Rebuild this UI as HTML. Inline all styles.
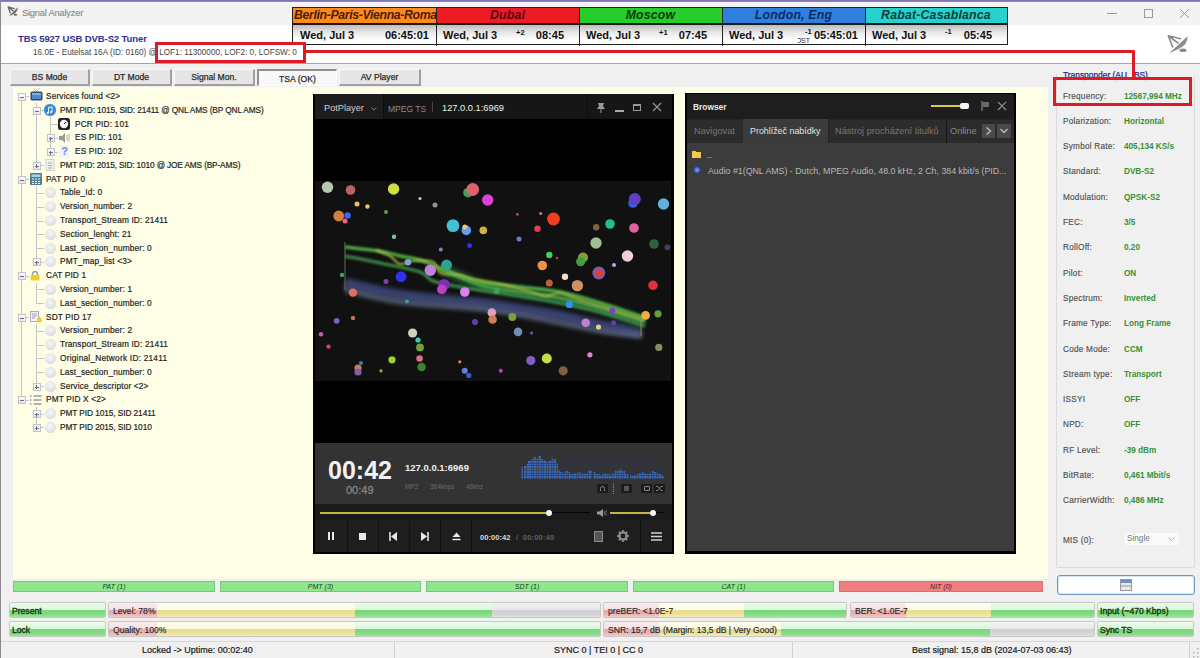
<!DOCTYPE html>
<html><head><meta charset="utf-8">
<style>
*{margin:0;padding:0;box-sizing:border-box}
html,body{width:1200px;height:658px;overflow:hidden;background:#f0f0f0;font-family:"Liberation Sans",sans-serif}
.a{position:absolute}
#win{position:absolute;left:0;top:0;width:1200px;height:658px;background:#f0f0f0;border-left:1px solid #8a8a8a}
#topb{left:0;top:0;width:1200px;height:2px;background:linear-gradient(#746aa8,#9a90c8)}
#title{left:1px;top:2px;width:1199px;height:23px;background:linear-gradient(#f6f2fa 0,#f3f3f3 3px,#f3f3f3 100%)}
#hdr{left:1px;top:25px;width:1199px;height:38px;background:#fff}
#sep{left:1px;top:63px;width:1199px;height:1px;background:#a3a3a3}
.t{position:absolute;white-space:nowrap}
/* clock table */
#clk{left:292px;top:7px;width:716px;height:38px;border:1px solid #222;background:#fff}
.ch{position:absolute;top:0;height:17px;border-bottom:2px solid #1a1a1a;font:bold italic 12.3px "Liberation Sans";text-align:center;line-height:15px;letter-spacing:0.2px;white-space:nowrap;overflow:hidden}
.cr{position:absolute;top:17px;height:19px;background:linear-gradient(#bdbdbd,#e8e8e8 40%,#fafafa 70%,#fff);font:bold 11px "Liberation Sans";line-height:20px;color:#111}
.cv{position:absolute;top:0;width:1px;height:38px;background:#222}
/* tabs */
.tab{position:absolute;top:69px;height:17px;background:#e6e6e6;border-top:1px solid #f8f8f8;border-left:1px solid #f8f8f8;border-right:2px solid #a0a0a0;border-bottom:2px solid #a0a0a0;font:8.6px "Liberation Sans";color:#222;text-align:center;line-height:15px;-webkit-text-stroke:0.25px #333}
#tree{left:13px;top:87px;width:1035px;height:492px;background:#fefee6}
.tr{position:absolute;font:8.3px "Liberation Sans";color:#161616;white-space:nowrap;letter-spacing:0.15px;-webkit-text-stroke:0.2px #333}
/* status bars */
.sb{position:absolute;top:581px;height:11px;background:#8ee68e;border:1px solid #78c878;font:italic 7px "Liberation Sans";color:#1f3f1f;text-align:center;line-height:10px}
.bar{position:absolute;height:16px;border:1px solid #c8c8c8;border-radius:2px;overflow:hidden;background:#e8e8e8}
.bar .lbl{position:absolute;left:4px;top:1px;font:8.6px "Liberation Sans";color:#2a2a2a;line-height:15px;white-space:nowrap;-webkit-text-stroke:0.15px currentColor}
.seg{position:absolute;top:0;height:14px}
.g{background:linear-gradient(#e8fce8 0,#dcf7dc 48%,#7ad67a 52%,#84da84 80%,#9be49b 100%)}
.y{background:linear-gradient(#fffef0 0,#fdfbe2 48%,#e8de8c 52%,#ebe19a 80%,#f3ecc0 100%)}
.p{background:linear-gradient(#fcecec 0,#f6e0e0 48%,#e4aaaa 52%,#e8b4b4 80%,#f0cccc 100%)}
.gr{background:linear-gradient(#f2f2f2 0,#e8e8e8 48%,#d0d0d0 52%,#d4d4d4 80%,#e0e0e0 100%)}
#status{left:1px;top:641px;width:1199px;height:17px;background:#f0f0f0;border-top:1px solid #d8d8d8}
.st{position:absolute;top:4px;font:9px "Liberation Sans";color:#1a1a1a;white-space:nowrap;-webkit-text-stroke:0.2px #1a1a1a}
/* right panel */
#grp{left:1056px;top:73px;width:139px;height:495px;border:1px solid #dcdcdc;border-top-color:transparent;border-radius:2px}
.rl{position:absolute;left:1063px;font:8.2px "Liberation Sans";color:#505050;white-space:nowrap;letter-spacing:0.25px;-webkit-text-stroke:0.15px #505050}
.rv{position:absolute;left:1124px;font:bold 8.2px "Liberation Sans";color:#369236;white-space:nowrap}
/* potplayer */
#pp{left:313px;top:94px;width:361px;height:460px;background:#000}
#bw{left:685px;top:93px;width:331px;height:461px;background:#000}
.red{position:absolute;background:#dc1c26}
</style></head><body>
<div id="win"></div>
<div id="topb" class="a"></div>
<div id="title" class="a"></div>
<div id="hdr" class="a"></div>
<div id="sep" class="a"></div>


<!-- title bar content -->
<svg class="a" style="left:6px;top:5px" width="14" height="14" viewBox="0 0 28 26" preserveAspectRatio="none"><g stroke="#6a6a6a" stroke-linecap="round" fill="none"><path d="M4.3 3.8L16.5 6.7M4.3 3.8L8.7 15M4.3 3.8L14 11" stroke-width="2.6"/></g><path d="M5.2 21.2L23.6 4.3Q23.5 13 15.5 16.5Z" fill="#6a6a6a"/><ellipse cx="19" cy="18.2" rx="3.6" ry="1.8" fill="#6a6a6a"/></svg>
<div class="t" style="left:22px;top:7.5px;font:9.3px 'Liberation Sans';color:#8c8c8c;letter-spacing:-0.2px;-webkit-text-stroke:0.15px #8c8c8c">Signal Analyzer</div>
<div class="a" style="left:1107px;top:13px;width:10px;height:1px;background:#999"></div>
<div class="a" style="left:1144px;top:9px;width:9px;height:9px;border:1px solid #999"></div>
<svg class="a" style="left:1179px;top:8px" width="11" height="11" viewBox="0 0 11 11"><path d="M1 1L10 10M10 1L1 10" stroke="#999" stroke-width="1"/></svg>
<!-- header -->
<div class="t" style="left:18px;top:33px;font:bold 9.5px 'Liberation Sans';color:#2e3192;letter-spacing:-0.1px">TBS 5927 USB DVB-S2 Tuner</div>
<div class="t" style="left:33px;top:48px;font:8.2px 'Liberation Sans';color:#454545">16.0E - Eutelsat 16A (ID: 0160) @ LOF1: 11300000, LOF2: 0, LOFSW: 0</div>
<svg class="a" style="left:1164px;top:32px" width="28" height="26" viewBox="0 0 28 26"><g stroke="#8a8a8a" stroke-linecap="round" fill="none"><path d="M4.3 3.8L16.5 6.7M4.3 3.8L8.7 15M4.3 3.8L14 11" stroke-width="1.6"/></g><path d="M5.2 21.2L23.6 4.3Q23.5 13 15.5 16.5Z" fill="#8c8c8c"/><ellipse cx="19" cy="18.2" rx="3.6" ry="1.8" fill="#8c8c8c"/></svg>
<!-- clock table -->
<div id="clk" class="a">
 <div class="ch" style="left:0;width:143px;background:#ff8a1c;color:#4a1e00;letter-spacing:-0.35px;text-indent:1px">Berlin-Paris-Vienna-Roma</div>
 <div class="ch" style="left:143px;width:143px;background:#ec1b24;color:#5c0010">Dubai</div>
 <div class="ch" style="left:286px;width:143px;background:#27cd2b;color:#083c08">Moscow</div>
 <div class="ch" style="left:429px;width:143px;background:#2f80dc;color:#0b2a66">London, Eng</div>
 <div class="ch" style="left:572px;width:142px;background:#27d2cc;color:#084040">Rabat-Casablanca</div>
 <div class="cr" style="left:0;width:143px"><span class="t" style="left:7px">Wed, Jul 3</span><span class="t" style="right:7px">06:45:01</span></div>
 <div class="cr" style="left:143px;width:143px"><span class="t" style="left:7px">Wed, Jul 3</span><span class="t" style="left:80px;top:4px;font-size:7.5px;line-height:8px">+2</span><span class="t" style="right:15px">08:45</span></div>
 <div class="cr" style="left:286px;width:143px"><span class="t" style="left:7px">Wed, Jul 3</span><span class="t" style="left:80px;top:4px;font-size:7.5px;line-height:8px">+1</span><span class="t" style="right:15px">07:45</span></div>
 <div class="cr" style="left:429px;width:143px"><span class="t" style="left:7px">Wed, Jul 3</span><span class="t" style="left:83px;top:3px;font-size:7.5px;line-height:8px">-1</span><span class="t" style="left:75px;top:12px;font:7px/7px 'Liberation Sans';color:#333">ↃST</span><span class="t" style="right:7px">05:45:01</span></div>
 <div class="cr" style="left:572px;width:142px"><span class="t" style="left:7px">Wed, Jul 3</span><span class="t" style="left:80px;top:3px;font-size:7.5px;line-height:8px">-1</span><span class="t" style="right:15px">05:45</span></div>
 <div class="cv" style="left:143px"></div><div class="cv" style="left:286px"></div><div class="cv" style="left:429px"></div><div class="cv" style="left:572px"></div>
</div>
<!-- tabs -->
<div class="tab" style="left:10px;width:80px">BS Mode</div>
<div class="tab" style="left:92px;width:80px">DT Mode</div>
<div class="tab" style="left:174px;width:81px">Signal Mon.</div>
<div class="tab" style="left:257px;width:80px;background:#f8f8f8;border-top:2px solid #909090;border-left:2px solid #909090;border-right:1px solid #fff;border-bottom:1px solid #fff;line-height:16px">TSA (OK)</div>
<div class="tab" style="left:339px;width:82px">AV Player</div>
<div id="tree" class="a"></div>
<!--TREE-->
<div style="position:absolute;background:#c4c4c4;left:21px;top:96px;width:1px;height:303px"></div>
<div style="position:absolute;background:#c4c4c4;left:36px;top:103px;width:1px;height:62px"></div>
<div style="position:absolute;background:#c4c4c4;left:50px;top:117px;width:1px;height:34px"></div>
<div style="position:absolute;background:#c4c4c4;left:36px;top:186px;width:1px;height:76px"></div>
<div style="position:absolute;background:#c4c4c4;left:36px;top:283px;width:1px;height:21px"></div>
<div style="position:absolute;background:#c4c4c4;left:36px;top:324px;width:1px;height:62px"></div>
<div style="position:absolute;background:#c4c4c4;left:36px;top:407px;width:1px;height:21px"></div>
<div style="position:absolute;background:#c4c4c4;left:21px;top:96px;width:8px;height:1px"></div>
<div style="position:absolute;left:17.5px;top:92.9px;width:8px;height:8px;border:1px solid #c2c2c8;background:linear-gradient(#fbfbfd,#e6e6ee)"><div style="position:absolute;left:1px;top:3px;width:4px;height:1px;background:#6a6a80"></div></div>
<svg style="position:absolute;left:30px;top:88px" width="13" height="13" viewBox="0 0 13 13"><path d="M3.5 0.5L6.5 3.5L9.5 0.5" stroke="#a8b0c0" fill="none"/><rect x="0.5" y="3.5" width="12" height="9" rx="1.5" fill="#3e4a5c"/><rect x="2" y="5" width="9" height="6" fill="#4a88d0"/><rect x="2" y="5" width="9" height="2" fill="#7ab0e8"/></svg>
<div class="tr" style="left:46px;top:90.9px;">Services found &lt;2&gt;</div>
<div style="position:absolute;background:#c4c4c4;left:36px;top:110px;width:8px;height:1px"></div>
<div style="position:absolute;left:32.5px;top:106.7px;width:8px;height:8px;border:1px solid #c2c2c8;background:linear-gradient(#fbfbfd,#e6e6ee)"><div style="position:absolute;left:1px;top:3px;width:4px;height:1px;background:#6a6a80"></div></div>
<svg style="position:absolute;left:43px;top:103px" width="14" height="14" viewBox="0 0 14 14"><circle cx="7" cy="7" r="6.6" fill="#bfe6f4"/><circle cx="7" cy="7" r="6" fill="#3a88cc"/><path d="M5.5 10V4.5L9 3.8V9" stroke="#e8f4ff" stroke-width="1" fill="none"/><circle cx="4.6" cy="10" r="1.1" fill="#e8f4ff"/><circle cx="8.1" cy="9.2" r="1.1" fill="#e8f4ff"/></svg>
<div class="tr" style="left:60px;top:104.7px;letter-spacing:-0.12px;">PMT PID: 1015, SID: 21411 @ QNL AMS (BP QNL AMS)</div>
<div style="position:absolute;background:#c4c4c4;left:50px;top:124px;width:8px;height:1px"></div>
<svg style="position:absolute;left:58px;top:118px" width="12" height="12" viewBox="0 0 12 12"><rect x="0" y="0" width="12" height="12" rx="2.5" fill="#222"/><circle cx="6" cy="6" r="4.2" fill="#f4f4f4"/><path d="M6 6L8 4" stroke="#333"/></svg>
<div class="tr" style="left:75px;top:118.5px;">PCR PID: 101</div>
<div style="position:absolute;background:#c4c4c4;left:50px;top:138px;width:8px;height:1px"></div>
<div style="position:absolute;left:46.5px;top:134.3px;width:8px;height:8px;border:1px solid #c2c2c8;background:linear-gradient(#fbfbfd,#e6e6ee)"><div style="position:absolute;left:1px;top:3px;width:4px;height:1px;background:#6a6a80"></div><div style="position:absolute;left:2.5px;top:1.5px;width:1px;height:4px;background:#6a6a80"></div></div>
<svg style="position:absolute;left:58px;top:132px" width="12" height="12" viewBox="0 0 12 12"><path d="M1 4h3l3-3v10l-3-3H1z" fill="#9a9a9a"/><path d="M9 3v6M11 2v8" stroke="#b0b0b0"/></svg>
<div class="tr" style="left:75px;top:132.3px;">ES PID: 101</div>
<div style="position:absolute;background:#c4c4c4;left:50px;top:152px;width:8px;height:1px"></div>
<div style="position:absolute;left:46.5px;top:148.1px;width:8px;height:8px;border:1px solid #c2c2c8;background:linear-gradient(#fbfbfd,#e6e6ee)"><div style="position:absolute;left:1px;top:3px;width:4px;height:1px;background:#6a6a80"></div><div style="position:absolute;left:2.5px;top:1.5px;width:1px;height:4px;background:#6a6a80"></div></div>
<div style="position:absolute;left:59px;top:145px;width:11px;height:13px;background:#f2f4fa;color:#6a8ad0;font:bold 11px 'Liberation Sans';text-align:center;line-height:13px">?</div>
<div class="tr" style="left:75px;top:146.1px;">ES PID: 102</div>
<div style="position:absolute;background:#c4c4c4;left:36px;top:165px;width:8px;height:1px"></div>
<div style="position:absolute;left:32.5px;top:161.8px;width:8px;height:8px;border:1px solid #c2c2c8;background:linear-gradient(#fbfbfd,#e6e6ee)"><div style="position:absolute;left:1px;top:3px;width:4px;height:1px;background:#6a6a80"></div><div style="position:absolute;left:2.5px;top:1.5px;width:1px;height:4px;background:#6a6a80"></div></div>
<svg style="position:absolute;left:45px;top:159px" width="10" height="12" viewBox="0 0 10 12"><rect x="1" y="0.5" width="8" height="11" fill="#eef0ee" stroke="#d0d4d0"/><path d="M3 4h4M3 6.5h4M3 9h4" stroke="#a8aca8" stroke-width="1.2"/></svg>
<div class="tr" style="left:60px;top:159.8px;letter-spacing:-0.15px;">PMT PID: 2015, SID: 1010 @ JOE AMS (BP-AMS)</div>
<div style="position:absolute;background:#c4c4c4;left:21px;top:179px;width:8px;height:1px"></div>
<div style="position:absolute;left:17.5px;top:175.6px;width:8px;height:8px;border:1px solid #c2c2c8;background:linear-gradient(#fbfbfd,#e6e6ee)"><div style="position:absolute;left:1px;top:3px;width:4px;height:1px;background:#6a6a80"></div></div>
<svg style="position:absolute;left:30px;top:173px" width="12" height="12" viewBox="0 0 12 12"><rect x="0" y="0" width="12" height="12" rx="1" fill="#5a7a92"/><rect x="1.5" y="1.5" width="9" height="2.5" fill="#9ad8f0"/><path d="M2 6h2M5 6h2M8 6h2M2 8.5h2M5 8.5h2M8 8.5h2M2 10.5h2M5 10.5h2M8 10.5h2" stroke="#f0f4f8" stroke-width="1.1"/></svg>
<div class="tr" style="left:46px;top:173.6px;">PAT PID 0</div>
<div style="position:absolute;background:#c4c4c4;left:36px;top:193px;width:8px;height:1px"></div>
<div style="position:absolute;left:44.5px;top:187.4px;width:11px;height:11px;border-radius:50%;background:radial-gradient(circle at 45% 40%,#f6f6f8 0,#e6e6ea 50%,#cdcdd2 100%)"></div>
<div class="tr" style="left:60px;top:187.4px;">Table_Id: 0</div>
<div style="position:absolute;background:#c4c4c4;left:36px;top:207px;width:8px;height:1px"></div>
<div style="position:absolute;left:44.5px;top:201.2px;width:11px;height:11px;border-radius:50%;background:radial-gradient(circle at 45% 40%,#f6f6f8 0,#e6e6ea 50%,#cdcdd2 100%)"></div>
<div class="tr" style="left:60px;top:201.2px;">Version_number: 2</div>
<div style="position:absolute;background:#c4c4c4;left:36px;top:221px;width:8px;height:1px"></div>
<div style="position:absolute;left:44.5px;top:215.0px;width:11px;height:11px;border-radius:50%;background:radial-gradient(circle at 45% 40%,#f6f6f8 0,#e6e6ea 50%,#cdcdd2 100%)"></div>
<div class="tr" style="left:60px;top:215.0px;">Transport_Stream ID: 21411</div>
<div style="position:absolute;background:#c4c4c4;left:36px;top:234px;width:8px;height:1px"></div>
<div style="position:absolute;left:44.5px;top:228.8px;width:11px;height:11px;border-radius:50%;background:radial-gradient(circle at 45% 40%,#f6f6f8 0,#e6e6ea 50%,#cdcdd2 100%)"></div>
<div class="tr" style="left:60px;top:228.8px;">Section_lenght: 21</div>
<div style="position:absolute;background:#c4c4c4;left:36px;top:248px;width:8px;height:1px"></div>
<div style="position:absolute;left:44.5px;top:242.6px;width:11px;height:11px;border-radius:50%;background:radial-gradient(circle at 45% 40%,#f6f6f8 0,#e6e6ea 50%,#cdcdd2 100%)"></div>
<div class="tr" style="left:60px;top:242.6px;">Last_section_number: 0</div>
<div style="position:absolute;background:#c4c4c4;left:36px;top:262px;width:8px;height:1px"></div>
<div style="position:absolute;left:32.5px;top:258.4px;width:8px;height:8px;border:1px solid #c2c2c8;background:linear-gradient(#fbfbfd,#e6e6ee)"><div style="position:absolute;left:1px;top:3px;width:4px;height:1px;background:#6a6a80"></div><div style="position:absolute;left:2.5px;top:1.5px;width:1px;height:4px;background:#6a6a80"></div></div>
<div style="position:absolute;left:44.5px;top:256.4px;width:11px;height:11px;border-radius:50%;background:radial-gradient(circle at 45% 40%,#f6f6f8 0,#e6e6ea 50%,#cdcdd2 100%)"></div>
<div class="tr" style="left:60px;top:256.4px;">PMT_map_list &lt;3&gt;</div>
<div style="position:absolute;background:#c4c4c4;left:21px;top:276px;width:8px;height:1px"></div>
<div style="position:absolute;left:17.5px;top:272.2px;width:8px;height:8px;border:1px solid #c2c2c8;background:linear-gradient(#fbfbfd,#e6e6ee)"><div style="position:absolute;left:1px;top:3px;width:4px;height:1px;background:#6a6a80"></div></div>
<svg style="position:absolute;left:30px;top:271px" width="10" height="10" viewBox="0 0 10 10"><path d="M2.5 4.5V3a2.5 2.5 0 0 1 5 0v1.5" stroke="#9a9a9a" stroke-width="1.4" fill="none"/><rect x="0.5" y="4" width="9" height="5.5" rx="1" fill="#f2cd2a"/></svg>
<div class="tr" style="left:46px;top:270.2px;">CAT PID 1</div>
<div style="position:absolute;background:#c4c4c4;left:36px;top:289px;width:8px;height:1px"></div>
<div style="position:absolute;left:44.5px;top:284.0px;width:11px;height:11px;border-radius:50%;background:radial-gradient(circle at 45% 40%,#f6f6f8 0,#e6e6ea 50%,#cdcdd2 100%)"></div>
<div class="tr" style="left:60px;top:284.0px;">Version_number: 1</div>
<div style="position:absolute;background:#c4c4c4;left:36px;top:303px;width:8px;height:1px"></div>
<div style="position:absolute;left:44.5px;top:297.8px;width:11px;height:11px;border-radius:50%;background:radial-gradient(circle at 45% 40%,#f6f6f8 0,#e6e6ea 50%,#cdcdd2 100%)"></div>
<div class="tr" style="left:60px;top:297.8px;">Last_section_number: 0</div>
<div style="position:absolute;background:#c4c4c4;left:21px;top:317px;width:8px;height:1px"></div>
<div style="position:absolute;left:17.5px;top:313.5px;width:8px;height:8px;border:1px solid #c2c2c8;background:linear-gradient(#fbfbfd,#e6e6ee)"><div style="position:absolute;left:1px;top:3px;width:4px;height:1px;background:#6a6a80"></div></div>
<svg style="position:absolute;left:30px;top:311px" width="12" height="12" viewBox="0 0 12 12"><rect x="0.5" y="0.5" width="8" height="10" fill="#f4f4f8" stroke="#a8b0c0"/><path d="M2 3h5M2 5h5M2 7h3" stroke="#98a4c0"/><path d="M7 8l2-3 2.5 3 0.5 2-2 1.5-2.5-0.5z" fill="#f2c82a"/></svg>
<div class="tr" style="left:46px;top:311.5px;">SDT PID 17</div>
<div style="position:absolute;background:#c4c4c4;left:36px;top:331px;width:8px;height:1px"></div>
<div style="position:absolute;left:44.5px;top:325.3px;width:11px;height:11px;border-radius:50%;background:radial-gradient(circle at 45% 40%,#f6f6f8 0,#e6e6ea 50%,#cdcdd2 100%)"></div>
<div class="tr" style="left:60px;top:325.3px;">Version_number: 2</div>
<div style="position:absolute;background:#c4c4c4;left:36px;top:345px;width:8px;height:1px"></div>
<div style="position:absolute;left:44.5px;top:339.1px;width:11px;height:11px;border-radius:50%;background:radial-gradient(circle at 45% 40%,#f6f6f8 0,#e6e6ea 50%,#cdcdd2 100%)"></div>
<div class="tr" style="left:60px;top:339.1px;">Transport_Stream ID: 21411</div>
<div style="position:absolute;background:#c4c4c4;left:36px;top:358px;width:8px;height:1px"></div>
<div style="position:absolute;left:44.5px;top:352.9px;width:11px;height:11px;border-radius:50%;background:radial-gradient(circle at 45% 40%,#f6f6f8 0,#e6e6ea 50%,#cdcdd2 100%)"></div>
<div class="tr" style="left:60px;top:352.9px;letter-spacing:0.23px;">Original_Network ID: 21411</div>
<div style="position:absolute;background:#c4c4c4;left:36px;top:372px;width:8px;height:1px"></div>
<div style="position:absolute;left:44.5px;top:366.7px;width:11px;height:11px;border-radius:50%;background:radial-gradient(circle at 45% 40%,#f6f6f8 0,#e6e6ea 50%,#cdcdd2 100%)"></div>
<div class="tr" style="left:60px;top:366.7px;">Last_section_number: 0</div>
<div style="position:absolute;background:#c4c4c4;left:36px;top:386px;width:8px;height:1px"></div>
<div style="position:absolute;left:32.5px;top:382.5px;width:8px;height:8px;border:1px solid #c2c2c8;background:linear-gradient(#fbfbfd,#e6e6ee)"><div style="position:absolute;left:1px;top:3px;width:4px;height:1px;background:#6a6a80"></div><div style="position:absolute;left:2.5px;top:1.5px;width:1px;height:4px;background:#6a6a80"></div></div>
<div style="position:absolute;left:44.5px;top:380.5px;width:11px;height:11px;border-radius:50%;background:radial-gradient(circle at 45% 40%,#f6f6f8 0,#e6e6ea 50%,#cdcdd2 100%)"></div>
<div class="tr" style="left:60px;top:380.5px;">Service_descriptor &lt;2&gt;</div>
<div style="position:absolute;background:#c4c4c4;left:21px;top:400px;width:8px;height:1px"></div>
<div style="position:absolute;left:17.5px;top:396.3px;width:8px;height:8px;border:1px solid #c2c2c8;background:linear-gradient(#fbfbfd,#e6e6ee)"><div style="position:absolute;left:1px;top:3px;width:4px;height:1px;background:#6a6a80"></div></div>
<svg style="position:absolute;left:30px;top:394px" width="12" height="12" viewBox="0 0 12 12"><path d="M0 2h1.5M0 6h1.5M0 10h1.5M3.5 2h8M3.5 6h8M3.5 10h8" stroke="#6a6a6a" stroke-width="1"/></svg>
<div class="tr" style="left:46px;top:394.3px;">PMT PID X &lt;2&gt;</div>
<div style="position:absolute;background:#c4c4c4;left:36px;top:414px;width:8px;height:1px"></div>
<div style="position:absolute;left:32.5px;top:410.1px;width:8px;height:8px;border:1px solid #c2c2c8;background:linear-gradient(#fbfbfd,#e6e6ee)"><div style="position:absolute;left:1px;top:3px;width:4px;height:1px;background:#6a6a80"></div><div style="position:absolute;left:2.5px;top:1.5px;width:1px;height:4px;background:#6a6a80"></div></div>
<div style="position:absolute;left:44.5px;top:408.1px;width:11px;height:11px;border-radius:50%;background:radial-gradient(circle at 45% 40%,#f6f6f8 0,#e6e6ea 50%,#cdcdd2 100%)"></div>
<div class="tr" style="left:60px;top:408.1px;letter-spacing:-0.08px;">PMT PID 1015, SID 21411</div>
<div style="position:absolute;background:#c4c4c4;left:36px;top:427px;width:8px;height:1px"></div>
<div style="position:absolute;left:32.5px;top:423.9px;width:8px;height:8px;border:1px solid #c2c2c8;background:linear-gradient(#fbfbfd,#e6e6ee)"><div style="position:absolute;left:1px;top:3px;width:4px;height:1px;background:#6a6a80"></div><div style="position:absolute;left:2.5px;top:1.5px;width:1px;height:4px;background:#6a6a80"></div></div>
<div style="position:absolute;left:44.5px;top:421.9px;width:11px;height:11px;border-radius:50%;background:radial-gradient(circle at 45% 40%,#f6f6f8 0,#e6e6ea 50%,#cdcdd2 100%)"></div>
<div class="tr" style="left:60px;top:421.9px;letter-spacing:-0.08px;">PMT PID 2015, SID 1010</div>
<!--/TREE-->
<div id="grp" class="a"></div>
<!-- right panel -->
<div class="t" style="left:1062px;top:70px;font:8.4px 'Liberation Sans';color:#2a2c88;padding:0 1px;-webkit-text-stroke:0.25px #2a2c88">Transponder (AU...BS)</div>
<div class="rl" style="top:91.5px">Frequency:</div>
<div class="rv" style="top:91.5px">12567,994 MHz</div>
<div class="rl" style="top:116.8px">Polarization:</div>
<div class="rv" style="top:116.8px">Horizontal</div>
<div class="rl" style="top:142.1px">Symbol Rate:</div>
<div class="rv" style="top:142.1px">405,134 KS/s</div>
<div class="rl" style="top:167.4px">Standard:</div>
<div class="rv" style="top:167.4px">DVB-S2</div>
<div class="rl" style="top:192.7px">Modulation:</div>
<div class="rv" style="top:192.7px">QPSK-S2</div>
<div class="rl" style="top:218.0px">FEC:</div>
<div class="rv" style="top:218.0px">3/5</div>
<div class="rl" style="top:243.3px">RollOff:</div>
<div class="rv" style="top:243.3px">0.20</div>
<div class="rl" style="top:268.6px">Pilot:</div>
<div class="rv" style="top:268.6px">ON</div>
<div class="rl" style="top:293.9px">Spectrum:</div>
<div class="rv" style="top:293.9px">Inverted</div>
<div class="rl" style="top:319.2px">Frame Type:</div>
<div class="rv" style="top:319.2px">Long Frame</div>
<div class="rl" style="top:344.5px">Code Mode:</div>
<div class="rv" style="top:344.5px">CCM</div>
<div class="rl" style="top:369.8px">Stream type:</div>
<div class="rv" style="top:369.8px">Transport</div>
<div class="rl" style="top:395.1px">ISSYI</div>
<div class="rv" style="top:395.1px">OFF</div>
<div class="rl" style="top:420.4px">NPD:</div>
<div class="rv" style="top:420.4px">OFF</div>
<div class="rl" style="top:445.7px">RF Level:</div>
<div class="rv" style="top:445.7px">-39 dBm</div>
<div class="rl" style="top:471.0px">BitRate:</div>
<div class="rv" style="top:471.0px">0,461 Mbit/s</div>
<div class="rl" style="top:496.3px">CarrierWidth:</div>
<div class="rv" style="top:496.3px">0,486 MHz</div>
<div class="rl" style="top:535.5px">MIS (0):</div>
<div class="a" style="left:1124px;top:532px;width:56px;height:14px;background:#fafafa;border:1px solid #f0f0f0"></div>
<div class="t" style="left:1127px;top:534px;font:8.2px 'Liberation Sans';color:#777">Single</div>
<svg class="a" style="left:1168px;top:537px" width="7" height="5" viewBox="0 0 7 5"><path d="M0.5 0.5L3.5 3.5L6.5 0.5" stroke="#aaa" fill="none"/></svg>
<div id="pp" class="a">
 <div class="a" style="left:2px;top:0;width:357px;height:25px;background:#161616"></div>
 <div class="a" style="left:2px;top:0;width:68px;height:25px;background:#1d1d1d"></div>
 <div class="a" style="left:70px;top:0;width:1px;height:25px;background:#0c0c0c"></div>
 <div class="a" style="left:274px;top:0;width:1px;height:25px;background:#0c0c0c"></div>
 <div class="t" style="left:11px;top:8.5px;font:9.2px 'Liberation Sans';color:#cfcfcf">PotPlayer</div>
 <svg class="a" style="left:58px;top:12.5px" width="6" height="4" viewBox="0 0 6 4"><path d="M0.5 0.5L3 3L5.5 0.5" stroke="#777" fill="none"/></svg>
 <div class="t" style="left:75px;top:9.5px;font:8.5px 'Liberation Sans';color:#8a8a8a">MPEG TS</div>
 <div class="a" style="left:119px;top:8px;width:1px;height:10px;background:#444"></div>
 <div class="t" style="left:129px;top:8.5px;font:9.3px 'Liberation Sans';color:#f0f0f0">127.0.0.1:6969</div>
 <svg class="a" style="left:283px;top:8px" width="10" height="11" viewBox="0 0 10 11"><path d="M2 1h6L7 4l2 3H1l2-3z" fill="#9a9a9a"/><path d="M5 7v4" stroke="#9a9a9a"/></svg>
 <div class="a" style="left:302px;top:16px;width:9px;height:2px;background:#aaa"></div>
 <div class="a" style="left:320px;top:10px;width:8px;height:7px;border:1px solid #999;border-top-width:2px"></div>
 <svg class="a" style="left:339px;top:8px" width="10" height="10" viewBox="0 0 10 10"><path d="M1 1L9 9M9 1L1 9" stroke="#9a9a9a" stroke-width="1.1"/></svg>
 <div class="a" style="left:2px;top:25px;width:357px;height:62px;background:#000"></div>
<svg class="a" style="left:2px;top:87px" width="356" height="200" viewBox="0 0 356 200">
<defs><filter id="bl" filterUnits="userSpaceOnUse" x="0" y="0" width="356" height="200"><feGaussianBlur stdDeviation="2"/></filter><filter id="bl2" filterUnits="userSpaceOnUse" x="0" y="0" width="356" height="200"><feGaussianBlur stdDeviation="0.9"/></filter></defs>
<rect width="356" height="200" fill="#111"/>
<path d="M30.0,102.0 C39.2,104.0 62.5,110.7 85.0,114.0 C107.5,117.3 145.0,119.7 165.0,122.0 C185.0,124.3 191.7,125.8 205.0,128.0 C218.3,130.2 231.7,132.3 245.0,135.0 C258.3,137.7 271.3,141.2 285.0,144.0 C298.7,146.8 320.0,150.7 327.0,152.0" stroke="#3e467a" stroke-width="10" fill="none" opacity="0.9" filter="url(#bl)"/>
<path d="M30.0,109.0 C39.2,111.0 62.5,117.8 85.0,121.0 C107.5,124.2 145.0,125.8 165.0,128.0 C185.0,130.2 191.7,131.7 205.0,134.0 C218.3,136.3 231.7,139.3 245.0,142.0 C258.3,144.7 271.3,147.8 285.0,150.0 C298.7,152.2 320.0,154.2 327.0,155.0" stroke="#65738e" stroke-width="5" fill="none" opacity="0.75" filter="url(#bl)"/>
<path d="M125.0,87.0 C131.7,89.8 151.7,100.0 165.0,104.0 C178.3,108.0 191.7,108.8 205.0,111.0 C218.3,113.2 231.7,114.3 245.0,117.0 C258.3,119.7 270.8,123.0 285.0,127.0 C299.2,131.0 322.5,138.7 330.0,141.0" stroke="#2c6a34" stroke-width="12" fill="none" opacity="0.6" filter="url(#bl)"/>
<path d="M30.0,75.0 C35.8,76.2 52.5,79.3 65.0,82.0 C77.5,84.7 96.2,88.0 105.0,91.0 C113.8,94.0 111.3,97.5 118.0,100.0 C124.7,102.5 137.2,104.5 145.0,106.0 C152.8,107.5 155.0,107.5 165.0,109.0 C175.0,110.5 191.7,112.8 205.0,115.0 C218.3,117.2 231.7,119.3 245.0,122.0 C258.3,124.7 270.8,127.2 285.0,131.0 C299.2,134.8 322.5,142.7 330.0,145.0" stroke="#3a8a48" stroke-width="3.5" fill="none" opacity="0.9" filter="url(#bl2)"/>
<path d="M125.0,87.0 C131.7,89.8 151.7,100.0 165.0,104.0 C178.3,108.0 191.7,108.8 205.0,111.0 C218.3,113.2 231.7,114.3 245.0,117.0 C258.3,119.7 270.8,123.0 285.0,127.0 C299.2,131.0 322.5,138.7 330.0,141.0" stroke="#48a048" stroke-width="4" fill="none" opacity="0.9" filter="url(#bl2)"/>
<path d="M30.0,66.0 C35.7,66.7 54.8,68.5 64.0,70.0 C73.2,71.5 78.2,73.5 85.0,75.0 C91.8,76.5 97.2,76.5 105.0,79.0 C112.8,81.5 122.0,86.3 132.0,90.0 C142.0,93.7 152.8,98.3 165.0,101.0 C177.2,103.7 191.7,104.3 205.0,106.0 C218.3,107.7 231.7,108.3 245.0,111.0 C258.3,113.7 270.8,117.7 285.0,122.0 C299.2,126.3 322.5,134.5 330.0,137.0" stroke="#50b042" stroke-width="3.5" fill="none" opacity="0.95" filter="url(#bl2)"/>
<path d="M61.0,69.0 C63.3,70.0 71.0,72.7 75.0,75.0 C79.0,77.3 81.2,82.2 85.0,83.0 C88.8,83.8 92.5,80.3 98.0,80.0 C103.5,79.7 113.3,79.0 118.0,81.0 C122.7,83.0 121.5,89.8 126.0,92.0 C130.5,94.2 139.7,93.0 145.0,94.0 C150.3,95.0 151.3,96.5 158.0,98.0 C164.7,99.5 176.3,101.2 185.0,103.0 C193.7,104.8 202.5,107.0 210.0,109.0 C217.5,111.0 224.2,114.5 230.0,115.0 C235.8,115.5 239.2,111.3 245.0,112.0 C250.8,112.7 258.3,116.8 265.0,119.0 C271.7,121.2 277.5,122.7 285.0,125.0 C292.5,127.3 302.5,130.7 310.0,133.0 C317.5,135.3 326.7,138.0 330.0,139.0" stroke="#a8b840" stroke-width="2.2" fill="none" opacity="0.9" filter="url(#bl2)"/>
<path d="M30,61 L30,109" stroke="#7a7a60" stroke-width="1.2" opacity="0.7"/>
<path d="M326,139 L326,155" stroke="#9a9a60" stroke-width="1.2" opacity="0.7"/>
<circle cx="12.5" cy="6.3" r="5.7" fill="#b8c8b0"/><circle cx="35.5" cy="9.0" r="4.8" fill="#c06060"/><circle cx="78.6" cy="8.0" r="5.7" fill="#d0e040"/><circle cx="105.0" cy="17.5" r="1.6" fill="#e0c080"/><circle cx="120.0" cy="24.0" r="2.5" fill="#8a9a8a"/><circle cx="42.0" cy="23.0" r="2.5" fill="#f0c060"/><circle cx="52.4" cy="25.5" r="2.2" fill="#f0c070"/><circle cx="71.0" cy="31.0" r="2.0" fill="#60a040"/><circle cx="23.7" cy="35.0" r="5.4" fill="#d08040"/><circle cx="32.6" cy="34.4" r="3.2" fill="#4060f0"/><circle cx="30.0" cy="40.0" r="2.5" fill="#f06090"/><circle cx="153.0" cy="11.7" r="4.8" fill="#40a060"/><circle cx="157.7" cy="8.5" r="6.4" fill="#e06070"/><circle cx="172.7" cy="19.0" r="5.7" fill="#e040e0"/><circle cx="138.0" cy="44.6" r="6.4" fill="#40c0d0"/><circle cx="151.3" cy="49.4" r="4.8" fill="#60a0f0"/><circle cx="149.8" cy="46.0" r="2.5" fill="#f0c080"/><circle cx="168.3" cy="49.4" r="3.8" fill="#d0b040"/><circle cx="79.0" cy="55.8" r="2.2" fill="#80c0a0"/><circle cx="154.5" cy="64.4" r="2.5" fill="#3030f0"/><circle cx="125.8" cy="68.5" r="2.0" fill="#8080c0"/><circle cx="202.4" cy="33.4" r="1.3" fill="#c06040"/><circle cx="225.7" cy="32.5" r="1.6" fill="#c08060"/><circle cx="238.5" cy="38.0" r="6.4" fill="#f04020"/><circle cx="222.5" cy="47.8" r="3.2" fill="#e04050"/><circle cx="204.0" cy="58.0" r="2.5" fill="#6080c0"/><circle cx="281.2" cy="46.2" r="3.2" fill="#806040"/><circle cx="295.0" cy="43.0" r="4.8" fill="#20c090"/><circle cx="319.0" cy="47.0" r="4.8" fill="#e060a0"/><circle cx="318.0" cy="22.0" r="4.8" fill="#3060e0"/><circle cx="319.8" cy="18.0" r="6.0" fill="#6040c0"/><circle cx="348.5" cy="23.0" r="5.7" fill="#60b0e0"/><circle cx="281.0" cy="62.0" r="5.7" fill="#a0c090"/><circle cx="234.3" cy="74.0" r="3.2" fill="#40d060"/><circle cx="242.0" cy="77.0" r="1.3" fill="#c04040"/><circle cx="312.5" cy="75.0" r="5.7" fill="#f0d0e0"/><circle cx="339.0" cy="63.0" r="4.8" fill="#306040"/><circle cx="352.4" cy="66.3" r="2.9" fill="#404060"/><circle cx="268.0" cy="76.5" r="5.0" fill="#80a040"/><circle cx="265.6" cy="80.7" r="4.5" fill="#40a040"/><circle cx="299.0" cy="84.0" r="2.0" fill="#a0b0f0"/><circle cx="227.3" cy="84.5" r="4.8" fill="#f09040"/><circle cx="250.0" cy="95.7" r="3.2" fill="#f0e0d0"/><circle cx="283.8" cy="92.0" r="6.4" fill="#7060c0"/><circle cx="283.8" cy="92.0" r="4.2" fill="#e04030"/><circle cx="234.3" cy="102.0" r="3.5" fill="#c06030"/><circle cx="262.4" cy="104.6" r="5.7" fill="#d09060"/><circle cx="338.0" cy="104.3" r="4.8" fill="#e03040"/><circle cx="27.0" cy="94.0" r="2.2" fill="#40a060"/><circle cx="38.0" cy="111.6" r="4.2" fill="#e07060"/><circle cx="86.0" cy="95.7" r="5.4" fill="#3030f0"/><circle cx="131.6" cy="84.0" r="5.4" fill="#30a090"/><circle cx="71.0" cy="100.4" r="2.5" fill="#8040a0"/><circle cx="93.0" cy="81.3" r="3.2" fill="#80a0e0"/><circle cx="129.0" cy="103.6" r="5.7" fill="#8030b0"/><circle cx="126.8" cy="108.4" r="4.8" fill="#c040c0"/><circle cx="149.8" cy="111.0" r="4.8" fill="#e080f0"/><circle cx="181.7" cy="110.0" r="3.0" fill="#40a060"/><circle cx="92.0" cy="120.5" r="2.0" fill="#40a0a0"/><circle cx="21.7" cy="139.8" r="2.9" fill="#8060c0"/><circle cx="38.0" cy="137.0" r="2.2" fill="#c07060"/><circle cx="6.0" cy="153.3" r="2.2" fill="#c060c0"/><circle cx="13.5" cy="165.6" r="2.2" fill="#e04060"/><circle cx="97.6" cy="152.0" r="4.6" fill="#d0d0c0"/><circle cx="103.0" cy="159.0" r="2.6" fill="#40d0a0"/><circle cx="105.0" cy="166.4" r="3.9" fill="#70a040"/><circle cx="104.6" cy="177.5" r="3.3" fill="#e07080"/><circle cx="106.6" cy="186.0" r="4.3" fill="#408030"/><circle cx="77.0" cy="178.8" r="3.6" fill="#a0d030"/><circle cx="66.0" cy="189.8" r="1.6" fill="#80c040"/><circle cx="46.0" cy="182.0" r="2.0" fill="#4080a0"/><circle cx="43.0" cy="187.0" r="3.6" fill="#c08060"/><circle cx="43.0" cy="191.0" r="3.6" fill="#8060a0"/><circle cx="144.8" cy="180.8" r="1.6" fill="#f08040"/><circle cx="149.7" cy="189.8" r="3.0" fill="#6080e0"/><circle cx="153.8" cy="194.4" r="2.6" fill="#3060c0"/><circle cx="185.8" cy="189.8" r="2.0" fill="#c040c0"/><circle cx="160.0" cy="141.0" r="3.0" fill="#6040a0"/><circle cx="176.8" cy="131.6" r="4.3" fill="#e0a0c0"/><circle cx="177.6" cy="138.5" r="4.3" fill="#d08050"/><circle cx="197.3" cy="136.0" r="4.0" fill="#80a040"/><circle cx="203.0" cy="150.9" r="4.3" fill="#7090b0"/><circle cx="216.6" cy="152.0" r="1.6" fill="#6060a0"/><circle cx="215.8" cy="179.6" r="4.6" fill="#8060c0"/><circle cx="231.8" cy="177.5" r="5.0" fill="#c0e040"/><circle cx="248.2" cy="189.8" r="4.6" fill="#806040"/><circle cx="274.9" cy="173.8" r="2.6" fill="#e080e0"/><circle cx="254.4" cy="123.4" r="3.6" fill="#3090f0"/><circle cx="270.7" cy="141.8" r="4.3" fill="#c080d0"/><circle cx="283.5" cy="146.0" r="2.6" fill="#e0d080"/><circle cx="297.4" cy="129.5" r="3.0" fill="#8040c0"/><circle cx="298.6" cy="141.8" r="2.6" fill="#6040a0"/><circle cx="330.6" cy="134.4" r="4.3" fill="#f0b040"/><circle cx="343.0" cy="132.8" r="3.6" fill="#60a040"/><circle cx="343.8" cy="166.4" r="3.6" fill="#809060"/><circle cx="115.3" cy="89.3" r="5.7" fill="#c080e0"/>
</svg>
 <div class="a" style="left:2px;top:349px;width:357px;height:61px;background:#333"></div>
 <div class="t" style="left:15px;top:361.5px;font:bold 25px 'Liberation Sans';color:#f2f2f2;letter-spacing:0px">00:42</div>
 <div class="t" style="left:33px;top:389.5px;font:11px 'Liberation Sans';color:#858585;-webkit-text-stroke:0.3px #858585">00:49</div>
 <div class="t" style="left:92px;top:368px;font:bold 9.5px 'Liberation Sans';color:#f0f0f0">127.0.0.1:6969</div>
 <div class="t" style="left:92px;top:389px;font:6.5px 'Liberation Sans';color:#6a6a6a">MP2</div>
 <div class="t" style="left:117px;top:389px;font:6.5px 'Liberation Sans';color:#6a6a6a">384kbps</div>
 <div class="t" style="left:153px;top:389px;font:6.5px 'Liberation Sans';color:#6a6a6a">48khz</div>
 <div class="a" style="left:208px;top:361px;width:143px;height:24px;background:repeating-linear-gradient(90deg,#2f3440 0 2px,#333 2px 2.5px)"></div>
<div class="a" style="left:208.0px;top:373px;width:2.47px;height:12px;background:#3a68b8"></div>
<div class="a" style="left:210.5px;top:372px;width:2.47px;height:13px;background:#3a68b8"></div>
<div class="a" style="left:212.9px;top:370px;width:2.47px;height:15px;background:#3a68b8"></div>
<div class="a" style="left:215.4px;top:367px;width:2.47px;height:18px;background:#3a68b8"></div>
<div class="a" style="left:217.9px;top:365px;width:2.47px;height:20px;background:#3a68b8"></div>
<div class="a" style="left:220.3px;top:363px;width:2.47px;height:22px;background:#3a68b8"></div>
<div class="a" style="left:222.8px;top:364px;width:2.47px;height:21px;background:#3a68b8"></div>
<div class="a" style="left:225.3px;top:362px;width:2.47px;height:23px;background:#3a68b8"></div>
<div class="a" style="left:227.7px;top:365px;width:2.47px;height:20px;background:#3a68b8"></div>
<div class="a" style="left:230.2px;top:366px;width:2.47px;height:19px;background:#3a68b8"></div>
<div class="a" style="left:232.7px;top:368px;width:2.47px;height:17px;background:#3a68b8"></div>
<div class="a" style="left:235.1px;top:367px;width:2.47px;height:18px;background:#3a68b8"></div>
<div class="a" style="left:237.6px;top:364px;width:2.47px;height:21px;background:#3a68b8"></div>
<div class="a" style="left:240.1px;top:365px;width:2.47px;height:20px;background:#3a68b8"></div>
<div class="a" style="left:242.5px;top:369px;width:2.47px;height:16px;background:#3a68b8"></div>
<div class="a" style="left:245.0px;top:376px;width:2.47px;height:9px;background:#3a68b8"></div>
<div class="a" style="left:247.4px;top:378px;width:2.47px;height:7px;background:#3a68b8"></div>
<div class="a" style="left:249.9px;top:379px;width:2.47px;height:6px;background:#3a68b8"></div>
<div class="a" style="left:252.4px;top:377px;width:2.47px;height:8px;background:#3a68b8"></div>
<div class="a" style="left:254.8px;top:378px;width:2.47px;height:7px;background:#3a68b8"></div>
<div class="a" style="left:257.3px;top:380px;width:2.47px;height:5px;background:#3a68b8"></div>
<div class="a" style="left:259.8px;top:379px;width:2.47px;height:6px;background:#3a68b8"></div>
<div class="a" style="left:262.2px;top:379px;width:2.47px;height:6px;background:#3a68b8"></div>
<div class="a" style="left:264.7px;top:378px;width:2.47px;height:7px;background:#3a68b8"></div>
<div class="a" style="left:267.2px;top:379px;width:2.47px;height:6px;background:#3a68b8"></div>
<div class="a" style="left:269.6px;top:380px;width:2.47px;height:5px;background:#3a68b8"></div>
<div class="a" style="left:272.1px;top:379px;width:2.47px;height:6px;background:#3a68b8"></div>
<div class="a" style="left:274.6px;top:377px;width:2.47px;height:8px;background:#3a68b8"></div>
<div class="a" style="left:277.0px;top:376px;width:2.47px;height:9px;background:#3a68b8"></div>
<div class="a" style="left:279.5px;top:378px;width:2.47px;height:7px;background:#3a68b8"></div>
<div class="a" style="left:282.0px;top:379px;width:2.47px;height:6px;background:#3a68b8"></div>
<div class="a" style="left:284.4px;top:380px;width:2.47px;height:5px;background:#3a68b8"></div>
<div class="a" style="left:286.9px;top:381px;width:2.47px;height:4px;background:#3a68b8"></div>
<div class="a" style="left:289.4px;top:380px;width:2.47px;height:5px;background:#3a68b8"></div>
<div class="a" style="left:291.8px;top:379px;width:2.47px;height:6px;background:#3a68b8"></div>
<div class="a" style="left:294.3px;top:380px;width:2.47px;height:5px;background:#3a68b8"></div>
<div class="a" style="left:296.8px;top:381px;width:2.47px;height:4px;background:#3a68b8"></div>
<div class="a" style="left:299.2px;top:379px;width:2.47px;height:6px;background:#3a68b8"></div>
<div class="a" style="left:301.7px;top:377px;width:2.47px;height:8px;background:#3a68b8"></div>
<div class="a" style="left:304.2px;top:376px;width:2.47px;height:9px;background:#3a68b8"></div>
<div class="a" style="left:306.6px;top:375px;width:2.47px;height:10px;background:#3a68b8"></div>
<div class="a" style="left:309.1px;top:377px;width:2.47px;height:8px;background:#3a68b8"></div>
<div class="a" style="left:311.6px;top:379px;width:2.47px;height:6px;background:#3a68b8"></div>
<div class="a" style="left:314.0px;top:380px;width:2.47px;height:5px;background:#3a68b8"></div>
<div class="a" style="left:316.5px;top:381px;width:2.47px;height:4px;background:#3a68b8"></div>
<div class="a" style="left:318.9px;top:382px;width:2.47px;height:3px;background:#3a68b8"></div>
<div class="a" style="left:321.4px;top:381px;width:2.47px;height:4px;background:#3a68b8"></div>
<div class="a" style="left:323.9px;top:380px;width:2.47px;height:5px;background:#3a68b8"></div>
<div class="a" style="left:326.3px;top:379px;width:2.47px;height:6px;background:#3a68b8"></div>
<div class="a" style="left:328.8px;top:378px;width:2.47px;height:7px;background:#3a68b8"></div>
<div class="a" style="left:331.3px;top:379px;width:2.47px;height:6px;background:#3a68b8"></div>
<div class="a" style="left:333.7px;top:380px;width:2.47px;height:5px;background:#3a68b8"></div>
<div class="a" style="left:336.2px;top:379px;width:2.47px;height:6px;background:#3a68b8"></div>
<div class="a" style="left:338.7px;top:377px;width:2.47px;height:8px;background:#3a68b8"></div>
<div class="a" style="left:341.1px;top:378px;width:2.47px;height:7px;background:#3a68b8"></div>
<div class="a" style="left:343.6px;top:379px;width:2.47px;height:6px;background:#3a68b8"></div>
<div class="a" style="left:346.1px;top:380px;width:2.47px;height:5px;background:#3a68b8"></div>
<div class="a" style="left:348.5px;top:381px;width:2.47px;height:4px;background:#3a68b8"></div>
<div class="a" style="left:208px;top:361px;width:143px;height:24px;background:repeating-linear-gradient(0deg,rgba(51,51,51,0.55) 0 1px,transparent 1px 2.5px),repeating-linear-gradient(90deg,rgba(51,51,51,0.5) 0 0.8px,transparent 0.8px 2.5px)"></div>
 <div class="a" style="left:284px;top:390px;width:11px;height:9px;background:#1c1c1c;border-radius:1px"></div>
 <svg class="a" style="left:287px;top:392px" width="5" height="5" viewBox="0 0 5 5"><path d="M0.5 5V2.5a2 2 0 0 1 4 0V5" stroke="#8a8a8a" fill="none"/></svg>
 <div class="a" style="left:300px;top:389px;width:1px;height:11px;border-left:1px dotted #888"></div>
 <div class="a" style="left:308px;top:390px;width:11px;height:9px;background:#1c1c1c;border-radius:1px"></div>
 <div class="a" style="left:311px;top:392px;width:5px;height:5px;background:#555"></div>
 <div class="a" style="left:328px;top:390px;width:11px;height:9px;background:#1c1c1c;border-radius:1px"></div>
 <div class="a" style="left:331px;top:392px;width:6px;height:5px;border:1px solid #8a8a8a;border-radius:1px"></div>
 <div class="a" style="left:341px;top:390px;width:11px;height:9px;background:#1c1c1c;border-radius:1px"></div>
 <svg class="a" style="left:343px;top:391px" width="7" height="7" viewBox="0 0 7 7"><path d="M0 1.5h2l3 4h2M0 5.5h2l3-4h2" stroke="#8a8a8a" fill="none" stroke-width="0.9"/></svg>
 <div class="a" style="left:2px;top:410px;width:357px;height:17px;background:#1b1b1b"></div>
 <div class="a" style="left:7px;top:418px;width:229px;height:2px;background:#c4b443"></div>
 <div class="a" style="left:236px;top:418px;width:41px;height:1px;background:#050505"></div>
 <div class="a" style="left:233px;top:416px;width:6px;height:6px;border-radius:50%;background:#f4f4f4"></div>
 <svg class="a" style="left:284px;top:414px" width="10" height="10" viewBox="0 0 10 10"><path d="M0 3.5h2.5L6 1v8L2.5 6.5H0z" fill="#9a9a9a"/><path d="M7.5 3v4M9 2v6" stroke="#777" stroke-width="0.8"/></svg>
 <div class="a" style="left:297px;top:418px;width:43px;height:2px;background:#c4b443"></div>
 <div class="a" style="left:340px;top:418px;width:11px;height:1px;background:#050505"></div>
 <div class="a" style="left:337px;top:416px;width:6px;height:6px;border-radius:50%;background:#f4f4f4"></div>
 <div class="a" style="left:2px;top:427px;width:357px;height:31px;background:#1e1e1e"></div>
 <div class="a" style="left:34px;top:427px;width:1px;height:31px;background:#111"></div>
 <div class="a" style="left:65px;top:427px;width:1px;height:31px;background:#111"></div>
 <div class="a" style="left:96px;top:427px;width:1px;height:31px;background:#111"></div>
 <div class="a" style="left:127px;top:427px;width:1px;height:31px;background:#111"></div>
 <div class="a" style="left:158px;top:427px;width:1px;height:31px;background:#111"></div>
 <div class="a" style="left:327px;top:427px;width:1px;height:31px;background:#111"></div>
 <div class="a" style="left:15px;top:438px;width:2px;height:8px;background:#e8e8e8"></div>
 <div class="a" style="left:19px;top:438px;width:2px;height:8px;background:#e8e8e8"></div>
 <div class="a" style="left:46px;top:439px;width:7px;height:7px;background:#e8e8e8"></div>
 <svg class="a" style="left:76px;top:438px" width="9" height="9" viewBox="0 0 9 9"><path d="M1 0v9" stroke="#e8e8e8" stroke-width="1.6"/><path d="M8 0v9L2 4.5z" fill="#e8e8e8"/></svg>
 <svg class="a" style="left:107px;top:438px" width="9" height="9" viewBox="0 0 9 9"><path d="M8 0v9" stroke="#e8e8e8" stroke-width="1.6"/><path d="M1 0v9L7 4.5z" fill="#e8e8e8"/></svg>
 <svg class="a" style="left:139px;top:438px" width="9" height="9" viewBox="0 0 9 9"><path d="M4.5 0.5L8.5 5H0.5z" fill="#e8e8e8"/><path d="M0.5 7.5h8" stroke="#e8e8e8" stroke-width="1.5"/></svg>
 <div class="t" style="left:167px;top:439px;font:bold 7.6px 'Liberation Sans';color:#d8d8d8">00:00:42</div>
 <div class="t" style="left:203px;top:439px;font:bold 7.6px 'Liberation Sans';color:#5e5e5e;letter-spacing:0.15px">/&nbsp; 00:00:49</div>
 <div class="a" style="left:281px;top:437px;width:9px;height:11px;border:1.5px solid #8a8a8a;background:#555"></div>
 <svg class="a" style="left:304px;top:436px" width="12" height="12" viewBox="0 0 12 12"><circle cx="6" cy="6" r="3.6" fill="none" stroke="#8a8a8a" stroke-width="2.4"/><path d="M6 0v2.4M6 9.6V12M0 6h2.4M9.6 6H12M1.8 1.8l1.7 1.7M8.5 8.5l1.7 1.7M1.8 10.2l1.7-1.7M8.5 3.5l1.7-1.7" stroke="#8a8a8a" stroke-width="1.8"/></svg>
 <svg class="a" style="left:338px;top:438px" width="11" height="9" viewBox="0 0 11 9"><path d="M0 1h11M0 4.5h11M0 8h11" stroke="#cfcfcf" stroke-width="1.4"/></svg>
</div>
<div id="bw" class="a">
 <div class="a" style="left:2px;top:1px;width:327px;height:25px;background:#1e1e1e"></div>
 <div class="t" style="left:8px;top:9px;font:bold 8.4px 'Liberation Sans';color:#e8e8e8">Browser</div>
 <div class="a" style="left:246px;top:12px;width:30px;height:2px;background:#d8c84a"></div>
 <div class="a" style="left:275px;top:10px;width:9px;height:6px;border-radius:2px;background:#f4f4f4"></div>
 <svg class="a" style="left:296px;top:8px" width="9" height="10" viewBox="0 0 9 10"><path d="M1 0v10" stroke="#777" stroke-width="1.4"/><path d="M2 1h6v5H2z" fill="#6a6a6a"/></svg>
 <svg class="a" style="left:312px;top:8px" width="10" height="10" viewBox="0 0 10 10"><path d="M1 1L9 9M9 1L1 9" stroke="#8a8a8a" stroke-width="1.1"/></svg>
 <div class="a" style="left:2px;top:26px;width:327px;height:24px;background:#242424"></div>
 <div class="a" style="left:2px;top:27px;width:56px;height:23px;background:#2c2c2c"></div>
 <div class="t" style="left:9px;top:33px;font:9.2px 'Liberation Sans';color:#777">Navigovat</div>
 <div class="a" style="left:58px;top:26px;width:85px;height:25px;background:#3b3b3b"></div>
 <div class="t" style="left:65px;top:33px;font:8.9px 'Liberation Sans';color:#e2e2e2">Prohlížeč nabídky</div>
 <div class="a" style="left:144px;top:27px;width:117px;height:23px;background:#2c2c2c"></div>
 <div class="t" style="left:150px;top:33px;font:9.2px 'Liberation Sans';color:#777">Nástroj procházení titulků</div>
 <div class="a" style="left:261px;top:27px;width:1px;height:23px;background:#161616"></div>
 <div class="a" style="left:262px;top:27px;width:67px;height:23px;background:#2c2c2c"></div>
 <div class="t" style="left:265px;top:33px;font:9.2px 'Liberation Sans';color:#8a8a8a">Online</div>
 <div class="a" style="left:297px;top:31px;width:13px;height:14px;background:#4a4a4a"></div>
 <svg class="a" style="left:300px;top:34px" width="7" height="8" viewBox="0 0 7 8"><path d="M1.5 0.5L5.5 4L1.5 7.5" stroke="#bbb" stroke-width="1.4" fill="none"/></svg>
 <div class="a" style="left:312px;top:31px;width:14px;height:14px;background:#4a4a4a"></div>
 <svg class="a" style="left:315px;top:35px" width="8" height="6" viewBox="0 0 8 6"><path d="M0.5 1L4 4.5L7.5 1" stroke="#bbb" stroke-width="1.4" fill="none"/></svg>
 <div class="a" style="left:2px;top:50px;width:327px;height:408px;background:#3c3c3c"></div>
 <svg class="a" style="left:7px;top:58px" width="9" height="7" viewBox="0 0 9 7"><path d="M0 0h3.5l1 1H9v6H0z" fill="#f2c94a"/></svg>
 <div class="t" style="left:22px;top:57px;font:9px 'Liberation Sans';color:#ccc">..</div>
 <div class="a" style="left:8px;top:73px;width:8px;height:8px;border-radius:50%;background:radial-gradient(circle,#8aa8e8 0,#4060b8 45%,#1c2a5a 80%)"></div>
 <div class="t" style="left:23px;top:72.5px;font:8.8px 'Liberation Sans';color:#b8b8b8">Audio #1(QNL AMS) - Dutch, MPEG Audio, 48.0 kHz, 2 Ch, 384 kbit/s (PID...</div>
</div>

<!-- section status -->
<div class="sb" style="left:13px;width:202px">PAT (1)</div>
<div class="sb" style="left:220px;width:201px">PMT (3)</div>
<div class="sb" style="left:426px;width:202px">SDT (1)</div>
<div class="sb" style="left:633px;width:201px">CAT (1)</div>
<div class="sb" style="left:839px;width:204px;background:#f08080;border-color:#d87070;color:#4a1a1a">NIT (0)</div>
<!-- button -->
<div class="a" style="left:1057px;top:575px;width:138px;height:20px;border:1px solid #6a9ac8;border-radius:3px;background:#fff;box-shadow:inset 0 0 0 1px #d8e6f4"></div>
<svg class="a" style="left:1120px;top:579px" width="12" height="12" viewBox="0 0 12 12"><rect x="0.5" y="0.5" width="11" height="11" fill="#e8e8e8" stroke="#9a9a9a"/><rect x="1" y="1" width="10" height="3" fill="#6a8fc0"/><path d="M1 7h10" stroke="#9a9a9a"/></svg>
<!-- signal bars -->
<div class="bar" style="left:9px;top:602px;width:97px"><div class="seg g" style="left:0;width:95px"></div><div class="lbl" style="left:2px;color:#143814;-webkit-text-stroke:0.35px #143814">Present</div></div>
<div class="bar" style="left:9px;top:621px;width:97px"><div class="seg g" style="left:0;width:95px"></div><div class="lbl" style="left:2px;color:#143814;-webkit-text-stroke:0.35px #143814">Lock</div></div>
<div class="bar" style="left:108px;top:602px;width:493px"><div class="seg p" style="left:0;width:48px"></div><div class="seg y" style="left:48px;width:198px"></div><div class="seg g" style="left:246px;width:137px"></div><div class="seg gr" style="left:383px;width:110px"></div><div class="lbl">Level: 78%</div></div>
<div class="bar" style="left:108px;top:621px;width:493px"><div class="seg p" style="left:0;width:48px"></div><div class="seg y" style="left:48px;width:198px"></div><div class="seg g" style="left:246px;width:247px"></div><div class="lbl">Quality: 100%</div></div>
<div class="bar" style="left:603px;top:602px;width:244px"><div class="seg p" style="left:0;width:55px"></div><div class="seg y" style="left:55px;width:85px"></div><div class="seg g" style="left:140px;width:104px"></div><div class="lbl">preBER: &lt;1.0E-7</div></div>
<div class="bar" style="left:850px;top:602px;width:245px"><div class="seg p" style="left:0;width:55px"></div><div class="seg y" style="left:55px;width:85px"></div><div class="seg g" style="left:140px;width:104px"></div><div class="lbl">BER: &lt;1.0E-7</div></div>
<div class="bar" style="left:603px;top:621px;width:492px"><div class="seg p" style="left:0;width:55px"></div><div class="seg y" style="left:55px;width:122px"></div><div class="seg g" style="left:177px;width:209px"></div><div class="seg gr" style="left:386px;width:106px"></div><div class="lbl">SNR: 15,7 dB (Margin: 13,5 dB | Very Good)</div></div>
<div class="bar" style="left:1097px;top:602px;width:97px"><div class="seg g" style="left:0;width:95px"></div><div class="lbl" style="left:2px;color:#143814;-webkit-text-stroke:0.35px #143814">Input (~470 Kbps)</div></div>
<div class="bar" style="left:1097px;top:621px;width:97px"><div class="seg g" style="left:0;width:95px"></div><div class="lbl" style="left:2px;color:#143814;-webkit-text-stroke:0.35px #143814">Sync TS</div></div>
<div id="status" class="a"></div>
<div class="st" style="left:142px;top:645px">Locked -&gt; Uptime: 00:02:40</div>
<div class="a" style="left:394px;top:642px;width:1px;height:16px;background:#d0d0d0"></div>
<div class="st" style="left:554px;top:645px">SYNC 0 | TEI 0 | CC 0</div>
<div class="a" style="left:792px;top:642px;width:1px;height:16px;background:#d0d0d0"></div>
<div class="st" style="left:912px;top:645px">Best signal: 15,8 dB (2024-07-03 06:43)</div>
<div class="a" style="left:1189px;top:642px;width:1px;height:16px;background:#d0d0d0"></div>


<!-- red annotations -->
<div class="red" style="left:155px;top:42px;width:151px;height:3px"></div>
<div class="red" style="left:155px;top:60px;width:151px;height:3px"></div>
<div class="red" style="left:155px;top:42px;width:3px;height:21px"></div>
<div class="red" style="left:303px;top:42px;width:3px;height:21px"></div>
<div class="red" style="left:306px;top:50px;width:829px;height:3px"></div>
<div class="red" style="left:1132px;top:50px;width:3px;height:29px"></div>
<div class="red" style="left:1053px;top:77px;width:139px;height:3px"></div>
<div class="red" style="left:1053px;top:103px;width:139px;height:3px"></div>
<div class="red" style="left:1053px;top:77px;width:3px;height:29px"></div>
<div class="red" style="left:1189px;top:77px;width:3px;height:29px"></div>
<svg class="a" style="left:1190px;top:646px" width="10" height="12" viewBox="0 0 10 12"><g fill="#b0b0b0"><rect x="7" y="2" width="1.5" height="1.5"/><rect x="7" y="6" width="1.5" height="1.5"/><rect x="3" y="6" width="1.5" height="1.5"/><rect x="7" y="10" width="1.5" height="1.5"/><rect x="3" y="10" width="1.5" height="1.5"/></g></svg>
</body></html>
